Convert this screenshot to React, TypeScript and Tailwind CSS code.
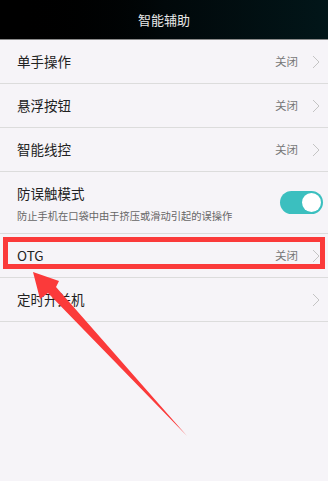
import React from "react";

type Row = {
  title: string;
  value?: string;
};

const topRows: Row[] = [
  { title: "单手操作", value: "关闭" },
  { title: "悬浮按钮", value: "关闭" },
  { title: "智能线控", value: "关闭" },
];

function Chevron() {
  return (
    <svg width="8" height="14" viewBox="0 0 8 14" className="ml-[14px]">
      <path d="M1 1 L7 7 L1 13" fill="none" stroke="#c4c4c4" strokeWidth="1" />
    </svg>
  );
}

function SettingRow({ title, value }: Row) {
  return (
    <div className="flex h-[44px] items-center border-b border-[#dcdcdc] pl-[17px] pr-[8px]">
      <span className="flex-1 text-[13.5px] text-[#222]">{title}</span>
      {value && <span className="text-[11.5px] text-[#777]">{value}</span>}
      <Chevron />
    </div>
  );
}

export default function App() {
  return (
    <div
      className="relative h-[481px] w-[328px] overflow-hidden bg-[#f6f4f8]"
      style={{ fontFamily: '"Noto Sans CJK SC", "Noto Sans", sans-serif' }}
    >
      <div className="flex h-[40px] items-center justify-center border-b border-[#8a8a8a] bg-gradient-to-r from-[#000000] via-[#01080a] to-[#021619]">
        <span className="text-[13px] text-[#e8e8e8]">智能辅助</span>
      </div>

      {topRows.map((r, i) => (
        <SettingRow key={i} title={r.title} value={r.value} />
      ))}

      <div className="flex h-[62px] items-center border-b border-[#dcdcdc] pl-[17px] pr-[5px]">
        <div className="flex flex-1 flex-col">
          <span className="text-[13.5px] leading-[20px] text-[#222]">防误触模式</span>
          <span className="mt-[6px] text-[10.25px] leading-[14px] text-[#666]">
            防止手机在口袋中由于挤压或滑动引起的误操作
          </span>
        </div>
        <div className="flex h-[23px] w-[43px] items-center justify-end rounded-full bg-[#3bbfbf] pr-[2px]">
          <div className="h-[19px] w-[19px] rounded-full bg-white" />
        </div>
      </div>

      <SettingRow title="OTG" value="关闭" />
      <SettingRow title="定时开关机" />

      {/* annotation overlay */}
      <div className="absolute left-[3px] top-[237px] h-[32px] w-[322px] border-[5px] border-[#fb3a3a]" />
      <svg className="absolute left-0 top-0" width="328" height="481" viewBox="0 0 328 481">
        <polygon
          points="33,272 59,281 56,287 187,436 48,293 40,299"
          fill="#fb3a3a"
        />
      </svg>
    </div>
  );
}
